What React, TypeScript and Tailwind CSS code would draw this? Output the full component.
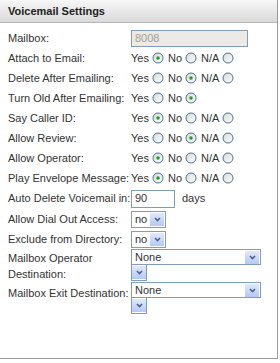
import React from 'react'

function Radio({ checked }: { checked?: boolean }) {
  return (
    <svg width="12" height="12" viewBox="0 0 12 12" className="ml-[3px] mr-[4px] shrink-0">
      <defs>
        <linearGradient id="rg" x1="0" y1="0" x2="1" y2="1">
          <stop offset="0%" stopColor="#d8d8d2" />
          <stop offset="100%" stopColor="#ffffff" />
        </linearGradient>
      </defs>
      <circle cx="6" cy="6" r="5" fill="url(#rg)" stroke="#4a74a0" strokeWidth="1" />
      {checked && <circle cx="6" cy="6" r="1.8" fill="#21a121" />}
    </svg>
  )
}

function Arrow() {
  return (
    <span className="flex h-[13px] w-[14px] items-center justify-center bg-gradient-to-b from-[#dfe8fd] to-[#b5c8f6]">
      <svg width="7" height="5" viewBox="0 0 7 5">
        <path d="M1 1 L3.5 3.5 L6 1" fill="none" stroke="#4d6185" strokeWidth="1.6" />
      </svg>
    </span>
  )
}

function YesNo({ checked, na = true }: { checked: number; na?: boolean }) {
  return (
    <div className="flex items-center">
      <span>Yes</span>
      <Radio checked={checked === 0} />
      <span>No</span>
      <Radio checked={checked === 1} />
      {na && <span>N/A</span>}
      {na && <Radio checked={checked === 2} />}
    </div>
  )
}

function SmallSelect({ value }: { value: string }) {
  return (
    <div className="flex h-[17px] w-[35px] items-center justify-between border border-[#7f9db9] bg-white pl-[3px] pr-[1px]">
      <span>{value}</span>
      <Arrow />
    </div>
  )
}

function WideSelect({ value }: { value: string }) {
  return (
    <div className="flex flex-col">
      <div className="flex h-[16px] w-[130px] items-center justify-between border border-[#7f9db9] bg-white pl-[3px] pr-[1px]">
        <span>{value}</span>
        <Arrow />
      </div>
      <div className="flex h-[16px] w-[16px] items-center justify-center border border-[#7f9db9] border-t-0 bg-white">
        <Arrow />
      </div>
    </div>
  )
}

const rows: { label: string; checked: number; na?: boolean }[] = [
  { label: 'Attach to Email:', checked: 0 },
  { label: 'Delete After Emailing:', checked: 1 },
  { label: 'Turn Old After Emailing:', checked: 1, na: false },
  { label: 'Say Caller ID:', checked: 0 },
  { label: 'Allow Review:', checked: 1 },
  { label: 'Allow Operator:', checked: 0 },
  { label: 'Play Envelope Message:', checked: 0 },
]

export default function App() {
  return (
    <div className="h-[363px] w-[280px] bg-white font-['Liberation_Sans',Arial,sans-serif] text-[11px] text-[#333]">
      <div className="flex h-[359px] w-[278px] flex-col border-r border-b border-[#9a9a9a]">
        <div className="flex h-[23px] items-center border-b border-[#b5b5b5] bg-gradient-to-b from-[#f7f7f7] to-[#d9d9d9] pl-[8px] font-bold text-[#222]">
          Voicemail Settings
        </div>
        <div className="flex flex-col pl-[8px] pt-[5px]">
          <div className="flex h-[20px] items-center">
            <div className="w-[123px]">Mailbox:</div>
            <div className="flex h-[17px] w-[117px] items-center border border-[#7f9db9] bg-[#ebeae4] pl-[3px] text-[#a0a0a0]">
              8008
            </div>
          </div>
          {rows.map((r) => (
            <div key={r.label} className="flex h-[20px] items-center">
              <div className="w-[123px]">{r.label}</div>
              <YesNo checked={r.checked} na={r.na !== false} />
            </div>
          ))}
          <div className="flex h-[21px] items-center">
            <div className="w-[123px]">Auto Delete Voicemail in:</div>
            <div className="flex h-[18px] w-[44px] items-center border border-[#7f9db9] bg-white pl-[3px]">90</div>
            <span className="ml-[7px]">days</span>
          </div>
          <div className="flex h-[20px] items-center">
            <div className="w-[123px]">Allow Dial Out Access:</div>
            <SmallSelect value="no" />
          </div>
          <div className="flex h-[20px] items-center">
            <div className="w-[123px]">Exclude from Directory:</div>
            <SmallSelect value="no" />
          </div>
          <div className="flex items-start">
            <div className="w-[123px] pt-[1px] leading-[16px]">
              Mailbox Operator
              <br />
              Destination:
            </div>
            <WideSelect value="None" />
          </div>
          <div className="flex items-start">
            <div className="w-[123px] pt-[4px] leading-[14px]">Mailbox Exit Destination:</div>
            <WideSelect value="None" />
          </div>
        </div>
      </div>
    </div>
  )
}
